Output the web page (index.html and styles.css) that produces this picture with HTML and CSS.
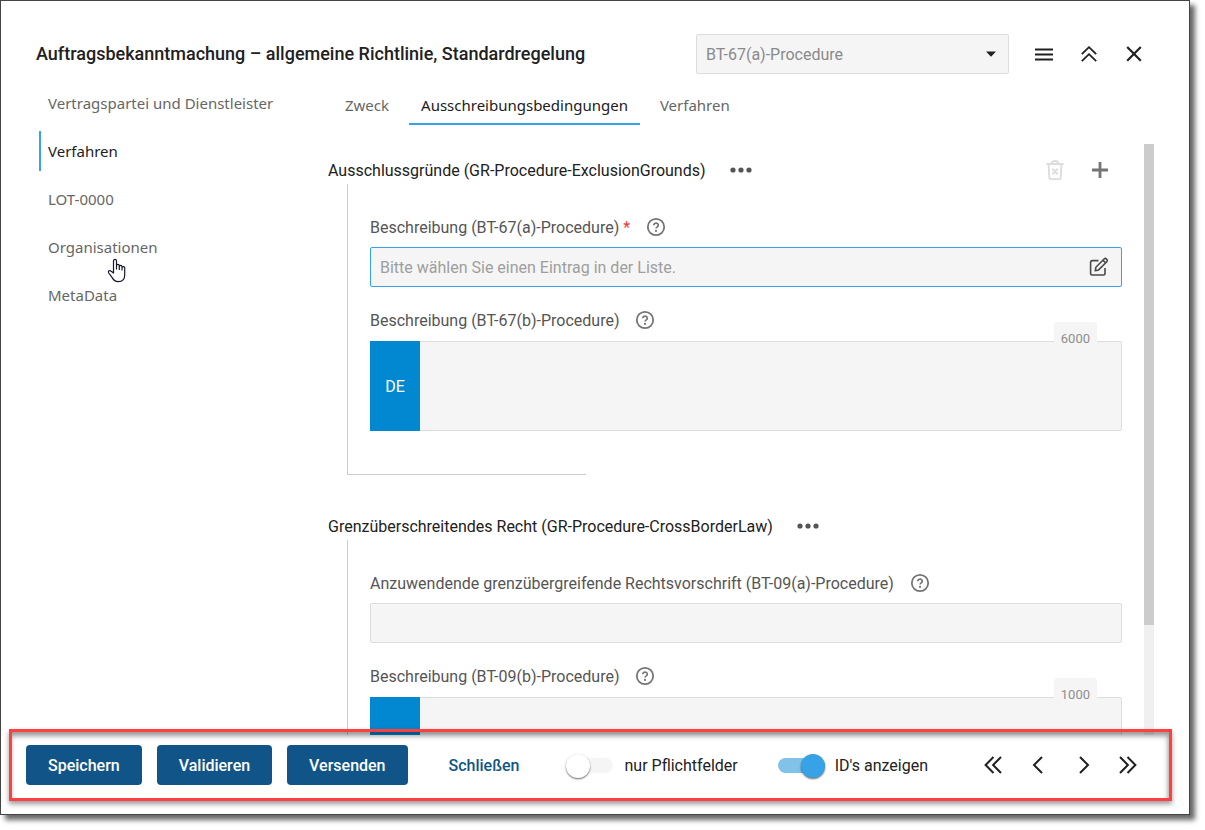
FILE: index.html
```html
<!DOCTYPE html>
<html lang="de">
<head>
<meta charset="utf-8">
<title>Auftragsbekanntmachung</title>
<link rel="stylesheet" href="styles.css">
</head>
<body>
<svg class="sprite" aria-hidden="true">
  <symbol id="help" viewBox="0 0 20 20"><circle cx="10" cy="10" r="8.2" fill="none" stroke="currentColor" stroke-width="1.8"/><path d="M7.700 8.300a2.300 2.100 0 1 1 3.600 1.600c-.9.6-1.300.9-1.300 1.700" fill="none" stroke="currentColor" stroke-width="1.700"/><circle cx="10" cy="13.900" r="1.100" fill="currentColor"/></symbol>
  <symbol id="dots" viewBox="0 0 22 6"><circle cx="3" cy="3" r="2.600"/><circle cx="11" cy="3" r="2.600"/><circle cx="19" cy="3" r="2.600"/></symbol>
</svg>
<div class="window">
  <header class="header">
    <h1 class="title">Auftragsbekanntmachung – allgemeine Richtlinie, Standardregelung</h1>
    <div class="picker">
      <select class="picker-select" aria-label="Feld"><option>BT-67(a)-Procedure</option></select>
      <svg class="picker-arrow" viewBox="0 0 10 6"><path d="M0 .5h10L5 5.800z" fill="#212121"/></svg>
    </div>
    <div class="header-actions">
      <button class="icon-button" aria-label="Menü"><svg width="18" height="14" viewBox="0 0 18 14" stroke="#212121" stroke-width="2.200"><path d="M0 2.500h18M0 7.500h18M0 12.500h18"/></svg></button>
      <button class="icon-button" aria-label="Einklappen"><svg width="16" height="16" viewBox="0 0 16 16" fill="none" stroke="#212121" stroke-width="1.800"><path d="M.8 8.200L8 1.200l7.200 7M.8 15.200L8 8.200l7.200 7"/></svg></button>
      <button class="icon-button" aria-label="Fenster schließen"><svg width="16" height="16" viewBox="0 0 16 16" stroke="#212121" stroke-width="2.200"><path d="M1.200 1L14.800 14.800M14.800 1L1.200 14.800"/></svg></button>
    </div>
  </header>

  <div class="body">
    <nav class="sidebar">
      <a class="nav-item" href="#">Vertragspartei und Dienstleister</a>
      <a class="nav-item active" href="#">Verfahren</a>
      <a class="nav-item" href="#">LOT-0000</a>
      <a class="nav-item" href="#">Organisationen
        <svg class="cursor" viewBox="0 0 20 25"><path d="M6.500 15V3.200C6.500.7 9.500.7 9.500 3.200V11V7.700c0-1.700 2.800-1.700 2.800 0V11.500V8.500c0-1.500 2.700-1.500 2.700 0V12V9.600c0-1.400 2.700-1.400 2.700 0V17c0 4.300-2.400 6.700-6.400 6.700-3.200 0-4.800-1.500-6.300-4.300L1.700 15c-1-2 .8-3.200 2.500-1.800z" fill="#fff" stroke="#15152c" stroke-width="1.200" stroke-linejoin="round"/></svg>
      </a>
      <a class="nav-item" href="#">MetaData</a>
    </nav>

    <main class="main">
      <div class="tabs" role="tablist">
        <button class="tab" role="tab">Zweck</button>
        <button class="tab active" role="tab" aria-selected="true">Ausschreibungsbedingungen</button>
        <button class="tab" role="tab">Verfahren</button>
      </div>

      <div class="scroller">
        <div class="content">
          <section class="group">
            <div class="group-head">
              <h2 class="group-title">Ausschlussgründe (GR-Procedure-ExclusionGrounds)</h2>
              <button class="more" aria-label="Mehr"><svg class="dots"><use href="#dots"/></svg></button>
              <div class="group-actions">
                <button class="icon-button" aria-label="Löschen" disabled><svg width="18" height="20" viewBox="0 0 18 20" fill="none" stroke="#dcdcdc" stroke-width="1.800"><path d="M.5 4h17M5.500 4c0-4 7-4 7 0M2.500 4l.8 14c0 .7.4 1.100 1.100 1.100h9.200c.7 0 1.100-.4 1.100-1.100l.8-14M6.300 8.700l5.400 5.600M11.700 8.700l-5.400 5.600"/></svg></button>
                <button class="icon-button" aria-label="Hinzufügen"><svg width="16" height="16" viewBox="0 0 16 16" stroke="#757575" stroke-width="2.800"><path d="M0 8h16M8 0v16"/></svg></button>
              </div>
            </div>
            <div class="group-body">
              <div class="field">
                <div class="label-row"><label for="f1">Beschreibung (BT-67(a)-Procedure) <span class="required">*</span></label><button class="help" aria-label="Hilfe"><svg><use href="#help"/></svg></button></div>
                <div class="input-box focused">
                  <input id="f1" class="input" type="text" placeholder="Bitte wählen Sie einen Eintrag in der Liste.">
                  <button class="edit" aria-label="Bearbeiten"><svg width="20" height="20" viewBox="0 0 20 20" fill="none" stroke="#4a4a4a" stroke-width="1.600" stroke-linejoin="round"><path d="M9.500 3.600H3.300c-1.200 0-1.700.5-1.700 1.700v11c0 1.200.5 1.700 1.700 1.700h11c1.200 0 1.700-.5 1.700-1.700V11M6.200 13.800l.7-3.600 8.200-8.200c1.500-1.500 4.100 1 2.700 2.700l-8.200 8.200zM14 3.200l2.700 2.700"/></svg></button>
                </div>
              </div>
              <div class="field">
                <div class="label-row"><label for="f2">Beschreibung (BT-67(b)-Procedure)</label><button class="help" aria-label="Hilfe"><svg><use href="#help"/></svg></button></div>
                <div class="text-box"><span class="lang">DE</span><textarea id="f2" class="textarea"></textarea><span class="counter">6000</span></div>
              </div>
            </div>
          </section>

          <section class="group">
            <div class="group-head">
              <h2 class="group-title">Grenzüberschreitendes Recht (GR-Procedure-CrossBorderLaw)</h2>
              <button class="more" aria-label="Mehr"><svg class="dots"><use href="#dots"/></svg></button>
            </div>
            <div class="group-body">
              <div class="field">
                <div class="label-row"><label for="f3">Anzuwendende grenzübergreifende Rechtsvorschrift (BT-09(a)-Procedure)</label><button class="help" aria-label="Hilfe"><svg><use href="#help"/></svg></button></div>
                <div class="input-box"><input id="f3" class="input" type="text"></div>
              </div>
              <div class="field">
                <div class="label-row"><label for="f4">Beschreibung (BT-09(b)-Procedure)</label><button class="help" aria-label="Hilfe"><svg><use href="#help"/></svg></button></div>
                <div class="text-box"><span class="lang"></span><textarea id="f4" class="textarea"></textarea><span class="counter">1000</span></div>
              </div>
            </div>
          </section>
        </div>
        <div class="scrollbar"><div class="thumb"></div></div>
      </div>
    </main>
  </div>

  <footer class="footer">
    <div class="buttons">
      <button class="primary">Speichern</button>
      <button class="primary">Validieren</button>
      <button class="primary">Versenden</button>
      <button class="link-button">Schließen</button>
    </div>
    <label class="switch"><input type="checkbox" class="toggle">nur Pflichtfelder</label>
    <label class="switch"><input type="checkbox" class="toggle" checked>ID's anzeigen</label>
    <div class="pager">
      <button class="icon-button" aria-label="Erste"><svg width="18" height="18" viewBox="0 0 18 18" fill="none" stroke="#212121" stroke-width="2"><path d="M9.500 1L1.600 9l7.900 8M17 1L9.100 9l7.900 8"/></svg></button>
      <button class="icon-button" aria-label="Zurück"><svg width="18" height="18" viewBox="0 0 18 18" fill="none" stroke="#212121" stroke-width="2"><path d="M13 1L5 9l8 8"/></svg></button>
      <button class="icon-button" aria-label="Weiter"><svg width="18" height="18" viewBox="0 0 18 18" fill="none" stroke="#212121" stroke-width="2"><path d="M6 1l8 8-8 8"/></svg></button>
      <button class="icon-button" aria-label="Letzte"><svg width="18" height="18" viewBox="0 0 18 18" fill="none" stroke="#212121" stroke-width="2"><path d="M1 1l7.900 8L1 17M8.500 1l7.900 8-7.900 8"/></svg></button>
    </div>
  </footer>
  <div class="highlight"></div>
</div>
</body>
</html>
```
FILE: styles.css
```css
* { box-sizing: border-box; }

body {
  margin: 0;
  height: 100vh;
  padding: 0 15px 15px 0;
  overflow: hidden;
  background: #fff;
  color: #212121;
  font: 16px/20px Roboto, sans-serif;
}

button, input, select, textarea { font: inherit; }

button {
  border: 0;
  padding: 0;
  background: none;
  color: inherit;
}

.sprite { display: none; }

.window {
  position: relative;
  display: flex;
  flex-direction: column;
  height: 100%;
  border: 1px solid #444;
  background: #fff;
  box-shadow: 5px 5px 5px rgba(0, 0, 0, 0.6);
}

.header {
  display: flex;
  align-items: center;
  gap: 12px;
  padding: 33px 33px 0 35px;
}

.title {
  flex: 1;
  margin: 0;
  font-size: 18px;
  font-weight: 500;
  white-space: nowrap;
}

.picker {
  position: relative;
  flex: 0 1 313px;
}

.picker-select {
  appearance: none;
  width: 100%;
  height: 40px;
  padding: 1px 36px 0 9px;
  border: 1px solid #ddd;
  border-radius: 2px;
  background: #f5f5f5;
  color: #8a8a8a;
}

.picker-arrow {
  position: absolute;
  top: 17px;
  right: 13px;
  width: 10px;
  height: 6px;
}

.header-actions, .group-actions, .pager { display: flex; }

.icon-button {
  display: flex;
  align-items: center;
  justify-content: center;
  width: 45px;
  height: 40px;
}

.body {
  flex: 1;
  display: flex;
  min-height: 0;
  padding: 9px 35px 0 38px;
}

.sidebar {
  display: flex;
  flex-direction: column;
  flex: 0 0 289px;
  gap: 8px;
  font: 15px/20px "Noto Sans", sans-serif;
}

.nav-item {
  position: relative;
  align-self: flex-start;
  padding: 10px 8px 10px 7px;
  border-left: 2px solid transparent;
  color: #666;
  text-decoration: none;
}

.nav-item.active {
  border-color: #37a3e6;
  color: #212121;
}

.cursor {
  position: absolute;
  top: 31px;
  left: 66px;
  width: 20px;
  height: 25px;
}

.main {
  flex: 1;
  display: flex;
  flex-direction: column;
  min-width: 0;
  padding-top: 2px;
}

.tabs {
  display: flex;
  gap: 8px;
  padding-left: 5px;
  font: 15px/20px "Noto Sans", sans-serif;
}

.tab {
  height: 40px;
  padding: 2px 12px 0;
  border-bottom: 2px solid transparent;
  color: #666;
}

.tab.active {
  border-color: #37a3e6;
  color: #212121;
}

.scroller {
  flex: 1;
  display: flex;
  min-height: 0;
  margin-top: 19px;
}

.content {
  flex: 1;
  min-width: 0;
  padding-right: 22px;
  overflow: hidden;
}

.scrollbar {
  width: 10px;
  background: #f0f0f0;
}

.thumb {
  height: 81.4%;
  background: #ccc;
}

.group { margin-bottom: 25px; }

.group-head {
  display: flex;
  align-items: center;
  height: 40px;
  padding-top: 12px;
}

.group-title {
  margin: 0;
  padding-top: 2px;
  font-size: 16px;
  font-weight: 400;
}

.more {
  display: flex;
  margin-left: 24px;
}

.dots {
  width: 22px;
  height: 6px;
  fill: #555;
}

.group-actions { margin-left: auto; }

.group-body {
  position: relative;
  display: flex;
  flex-direction: column;
  gap: 23px;
  margin-left: 19px;
  padding: 33px 0 44px 22px;
  border-left: 1px solid #ccc;
}

.group-body::after {
  content: "";
  position: absolute;
  bottom: 0;
  left: 0;
  width: 238px;
  border-bottom: 1px solid #ccc;
}

.label-row {
  display: flex;
  align-items: center;
  gap: 16px;
  height: 20px;
  margin-bottom: 10px;
  color: #555;
}

.label-row label { padding-top: 2px; }

.required { color: #f33; }

.help { display: flex; color: #757575; }

.help svg { width: 20px; height: 20px; }

.input-box {
  display: flex;
  align-items: center;
  height: 40px;
  padding: 0 12px 0 9px;
  border: 1px solid #ddd;
  border-radius: 2px;
  background: #f5f5f5;
}

.input-box.focused { border-color: #37a3e6; }

.input {
  flex: 1;
  min-width: 0;
  padding: 2px 0 0;
  border: 0;
  outline: 0;
  background: none;
}

.input::placeholder { color: #9e9e9e; }

.edit { display: flex; }

.text-box {
  position: relative;
  display: flex;
  height: 90px;
  margin-top: 11px;
}

.lang {
  display: flex;
  align-items: center;
  justify-content: center;
  width: 50px;
  padding-top: 2px;
  background: #0288d1;
  color: #fff;
}

.textarea {
  flex: 1;
  resize: none;
  border: 1px solid #ddd;
  border-left: 0;
  border-radius: 0 2px 2px 0;
  background: #f5f5f5;
}

.counter {
  position: absolute;
  top: -19px;
  right: 25px;
  height: 20px;
  padding: 7px 7px 0;
  border-radius: 3px 3px 0 0;
  background: #f5f5f5;
  color: #8e8e8e;
  font-size: 13px;
}

.footer {
  display: flex;
  align-items: center;
  padding: 10px 39px 29px 25px;
}

.buttons {
  display: flex;
  gap: 15px;
}

.primary, .link-button {
  height: 40px;
  padding: 2px 22px 0;
  border-radius: 4px;
  background: #115588;
  color: #fff;
  font-weight: 500;
}

.link-button {
  margin-left: 4px;
  background: none;
  color: #115588;
}

.switch {
  display: flex;
  align-items: center;
  gap: 12px;
  margin-left: 24px;
  padding-top: 1px;
}

.switch + .switch {
  gap: 10px;
  margin-left: 40px;
}

.toggle {
  appearance: none;
  display: flex;
  align-items: center;
  width: 47px;
  height: 15px;
  margin: 0;
  border-radius: 8px;
  background: #f5f5f5;
}

.toggle::before {
  content: "";
  width: 24px;
  height: 24px;
  border-radius: 50%;
  background: #fff;
  box-shadow: 0 1px 2px rgba(0, 0, 0, 0.6);
}

.toggle:checked {
  justify-content: flex-end;
  background: #80c2e8;
}

.toggle:checked::before { background: #37a3e6; }

.pager { margin-left: auto; }

/* Annotation frame around the footer */
.highlight {
  position: absolute;
  right: 17px;
  bottom: 13px;
  left: 8px;
  height: 72px;
  border: 3px solid #ff4040;
  box-shadow: 0 3px 5px rgba(0, 0, 0, 0.4), inset -1px 4px 5px rgba(0, 0, 0, 0.4);
  pointer-events: none;
}
```
